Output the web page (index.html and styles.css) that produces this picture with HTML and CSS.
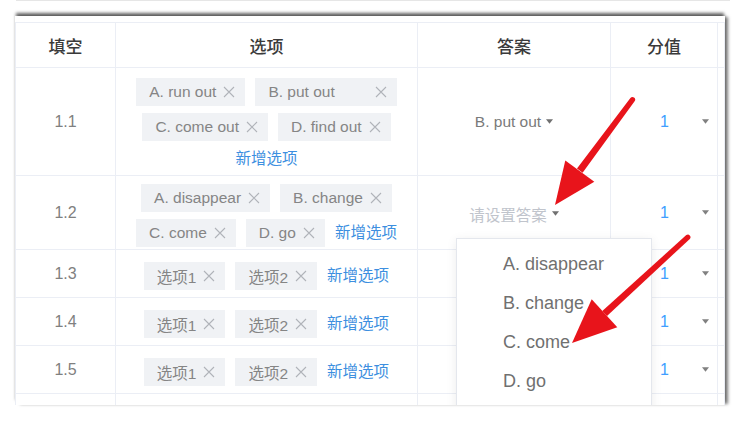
FILE: index.html
```html
<!DOCTYPE html>
<html lang="zh-CN">
<head>
<meta charset="utf-8">
<title>填空题设置</title>
<link rel="stylesheet" href="styles.css">
</head>
<body>
<div class="topline"></div>
<div class="frame">
  <div class="grid">
    <div class="cell head">填空</div>
    <div class="cell head">选项</div>
    <div class="cell head">答案</div>
    <div class="cell head">分值</div>
    <div class="cell head"></div>

    <div class="cell num">1.1</div>
    <div class="cell opts opts-first">
      <span class="tag">A. run out<svg class="x" viewBox="0 0 12 12"><path d="M1 1L11 11M11 1L1 11"/></svg></span>
      <span class="tag tag-wide">B. put out<svg class="x" viewBox="0 0 12 12"><path d="M1 1L11 11M11 1L1 11"/></svg></span>
      <span class="tag">C. come out<svg class="x" viewBox="0 0 12 12"><path d="M1 1L11 11M11 1L1 11"/></svg></span>
      <span class="tag">D. find out<svg class="x" viewBox="0 0 12 12"><path d="M1 1L11 11M11 1L1 11"/></svg></span>
      <span class="add add-line">新增选项</span>
    </div>
    <div class="cell ans">B. put out<svg class="caret" viewBox="0 0 8 5"><path d="M0 0H8L4 5Z"/></svg></div>
    <div class="cell score"><span class="val">1</span><svg class="caret caret-score" viewBox="0 0 8 5"><path d="M0 0H8L4 5Z"/></svg></div>
    <div class="cell"></div>

    <div class="cell num">1.2</div>
    <div class="cell opts opts-low">
      <span class="tag">A. disappear<svg class="x" viewBox="0 0 12 12"><path d="M1 1L11 11M11 1L1 11"/></svg></span>
      <span class="tag">B. change<svg class="x" viewBox="0 0 12 12"><path d="M1 1L11 11M11 1L1 11"/></svg></span>
      <span class="tag">C. come<svg class="x" viewBox="0 0 12 12"><path d="M1 1L11 11M11 1L1 11"/></svg></span>
      <span class="tag">D. go<svg class="x" viewBox="0 0 12 12"><path d="M1 1L11 11M11 1L1 11"/></svg></span>
      <span class="add">新增选项</span>
    </div>
    <div class="cell ans placeholder">请设置答案<svg class="caret" viewBox="0 0 8 5"><path d="M0 0H8L4 5Z"/></svg></div>
    <div class="cell score"><span class="val">1</span><svg class="caret caret-score" viewBox="0 0 8 5"><path d="M0 0H8L4 5Z"/></svg></div>
    <div class="cell"></div>

    <div class="cell num">1.3</div>
    <div class="cell opts opts-single">
      <span class="tag">选项1<svg class="x" viewBox="0 0 12 12"><path d="M1 1L11 11M11 1L1 11"/></svg></span>
      <span class="tag">选项2<svg class="x" viewBox="0 0 12 12"><path d="M1 1L11 11M11 1L1 11"/></svg></span>
      <span class="add">新增选项</span>
    </div>
    <div class="cell ans"></div>
    <div class="cell score"><span class="val">1</span><svg class="caret caret-score" viewBox="0 0 8 5"><path d="M0 0H8L4 5Z"/></svg></div>
    <div class="cell"></div>

    <div class="cell num">1.4</div>
    <div class="cell opts opts-single">
      <span class="tag">选项1<svg class="x" viewBox="0 0 12 12"><path d="M1 1L11 11M11 1L1 11"/></svg></span>
      <span class="tag">选项2<svg class="x" viewBox="0 0 12 12"><path d="M1 1L11 11M11 1L1 11"/></svg></span>
      <span class="add">新增选项</span>
    </div>
    <div class="cell ans"></div>
    <div class="cell score"><span class="val">1</span><svg class="caret caret-score" viewBox="0 0 8 5"><path d="M0 0H8L4 5Z"/></svg></div>
    <div class="cell"></div>

    <div class="cell num">1.5</div>
    <div class="cell opts opts-single">
      <span class="tag">选项1<svg class="x" viewBox="0 0 12 12"><path d="M1 1L11 11M11 1L1 11"/></svg></span>
      <span class="tag">选项2<svg class="x" viewBox="0 0 12 12"><path d="M1 1L11 11M11 1L1 11"/></svg></span>
      <span class="add">新增选项</span>
    </div>
    <div class="cell ans"></div>
    <div class="cell score"><span class="val">1</span><svg class="caret caret-score" viewBox="0 0 8 5"><path d="M0 0H8L4 5Z"/></svg></div>
    <div class="cell"></div>

    <div class="cell num"></div>
    <div class="cell"></div>
    <div class="cell"></div>
    <div class="cell"></div>
    <div class="cell"></div>
  </div>

  <ul class="dropdown">
    <li>A. disappear</li>
    <li>B. change</li>
    <li>C. come</li>
    <li>D. go</li>
  </ul>
</div>

<svg class="arrows" viewBox="0 0 751 437" width="751" height="437">
  <g fill="#e8141b">
    <path d="M630.4 98.1 A2.6 2.6 0 0 1 634.6 101.2 L582.6 172.8 L577.0 168.6 Z"/>
    <polygon points="555,205 565.3,160.5 594.3,181.7"/>
    <path d="M686.3 235.1 A2.6 2.6 0 0 1 689.8 238.9 L607.0 316.0 L602.3 310.9 Z"/>
    <polygon points="572,343 591.7,299.3 617.3,327.3"/>
  </g>
</svg>
</body>
</html>
```

FILE: styles.css
```css
* { box-sizing: border-box; }

html, body {
  margin: 0;
  padding: 0;
  background: #ffffff;
}

body {
  width: 751px;
  height: 437px;
  overflow: hidden;
  position: relative;
  font-family: "Liberation Sans", "Noto Sans CJK SC", Arial, sans-serif;
  color: #777;
}

.topline {
  height: 1px;
  width: 714px;
  margin-left: 16px;
  background: #e6e6e6;
}

.frame {
  position: relative;
  margin: 15px 0 0 15px;
  width: 710px;
  height: 389px;
  padding-top: 6px;
  background: #fff;
  overflow: hidden;
  box-shadow: 0 -4px 3px -1px rgba(0, 0, 0, 0.6), 4px 0 3px -1px rgba(0, 0, 0, 0.5);
}

.grid {
  display: grid;
  grid-template-columns: 101px 302px 193px 107px 7px;
  grid-template-rows: 45px 108px 74px 48px 48px 48px 48px;
  border-top: 1px solid #ebeef5;
}

.cell {
  border-right: 1px solid #ebeef5;
  border-bottom: 1px solid #ebeef5;
  display: flex;
  align-items: center;
  justify-content: center;
  font-size: 15.5px;
  min-width: 0;
}

.cell:nth-child(5n+1) {
  border-left: 1px solid #ebeef5;
}

.head {
  font-size: 17px;
  font-weight: 500;
  color: #3a3a3a;
}

.num {
  font-size: 16px;
  color: #808080;
}

.opts {
  flex-wrap: wrap;
  align-content: center;
  gap: 7px 10px;
  padding: 0 10px;
}

.opts-first {
  padding-top: 4px;
}

.opts-low {
  padding-top: 6px;
}

.opts-single {
  padding-top: 5px;
}

.tag {
  display: inline-flex;
  align-items: center;
  height: 28px;
  padding: 0 10px 0 13px;
  background: #f0f2f5;
  color: #858585;
  font-size: 15.5px;
  white-space: nowrap;
}

.x {
  width: 12px;
  height: 12px;
  margin-left: 7px;
  fill: none;
  stroke: #b0b3b9;
  stroke-width: 1.1;
}

.tag-wide .x {
  margin-left: 40px;
}

.add {
  color: #3d8fe0;
  font-size: 15.5px;
  line-height: 22px;
  white-space: nowrap;
}

.add-line {
  flex-basis: 100%;
  text-align: center;
}

.ans {
  gap: 5px;
  color: #7a7a7a;
  font-size: 15.5px;
}

.placeholder {
  color: #c0c4cc;
  padding-top: 2px;
}

.caret {
  width: 7px;
  height: 5px;
  fill: #707070;
}

.score {
  justify-content: flex-start;
  padding-left: 49px;
}

.val {
  color: #409eff;
  font-size: 16px;
}

.caret-score {
  margin-left: 33px;
  fill: #808080;
}

.dropdown {
  position: absolute;
  left: 441px;
  top: 222px;
  width: 196px;
  height: 200px;
  margin: 0;
  padding: 6px 0 0 46px;
  list-style: none;
  background: #fff;
  border: 1px solid #e4e7ed;
  box-shadow: 0 2px 10px rgba(0, 0, 0, 0.08);
}

.dropdown li {
  height: 39px;
  line-height: 39px;
  font-size: 18px;
  color: #707070;
  white-space: nowrap;
}

.arrows {
  position: absolute;
  left: 0;
  top: 0;
  pointer-events: none;
}
```
